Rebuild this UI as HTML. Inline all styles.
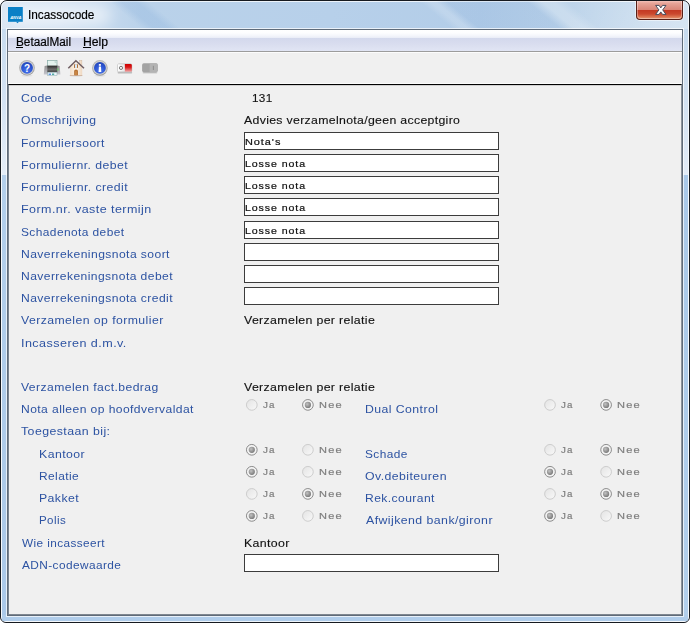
<!DOCTYPE html>
<html>
<head>
<meta charset="utf-8">
<title>Incassocode</title>
<style>
html,body{margin:0;padding:0;background:#fff;}
body{width:690px;height:623px;position:relative;overflow:hidden;font-family:"Liberation Sans",sans-serif;}
#win{position:absolute;left:0;top:0;width:688px;height:621px;border:1px solid #161a20;border-radius:7px 7px 6px 6px;
  background:
   linear-gradient(115deg, rgba(255,255,255,0) 0px, rgba(255,255,255,0) 520px, rgba(255,255,255,.22) 600px, rgba(255,255,255,.30) 690px) ,
   linear-gradient(90deg,#dbe7f4 0px,#d3e2f2 60px,#bad2ea 140px,#b7d0ea 330px,#b3cde8 480px,#bdd4ea 560px,#c9dcee 690px);
  overflow:hidden;}
#win:before{content:"";position:absolute;left:0;top:0;right:0;bottom:0;border:1px solid rgba(255,255,255,.75);border-radius:6px 6px 5px 5px;}
#sideL{position:absolute;left:1px;top:28px;width:6px;height:590px;background:linear-gradient(180deg,#c8dcf0 0px,#d3e2f3 70px,#e4edf7 146px,#b3cfeb 146px,#aac8e8 590px);}
#sideR{position:absolute;left:681px;top:28px;width:6px;height:590px;background:linear-gradient(180deg,#c6daee 0px,#d2e1f1 70px,#e2ebf6 146px,#a9c8e8 146px,#b2cfec 590px);}
#sideB{position:absolute;left:1px;top:614px;width:686px;height:6px;background:#b0cdeb;}
#edge{position:absolute;left:5px;top:27px;width:676px;height:587px;border:1px solid rgba(255,255,255,.7);}
#client{position:absolute;left:6px;top:28px;width:674px;height:585px;border:1px solid #5f6b79;background:#f0f0f0;}
#menu{position:absolute;left:0;top:0;width:674px;height:21px;background:linear-gradient(180deg,#ffffff 0px,#fdfdff 3px,#f3f5fb 6px,#e9ecf7 8px,#d3d8ec 8px,#d9ddef 14px,#e1e5f4 21px);}
#menuline{position:absolute;left:0;top:21px;width:674px;height:1px;background:#9c9c9c;}
#tool{position:absolute;left:0;top:22px;width:674px;height:31px;background:#f0f0f0;border-top:1px solid #fcfcfc;}
#tool:after{content:"";position:absolute;left:0;bottom:0;width:100%;height:1px;background:#fafafa;}
#panel{position:absolute;left:0;top:54px;width:672px;height:529px;background:#f0f0f0;border-top:1px solid #000;border-left:1px solid #7b8591;border-right:1px solid #8d949c;border-bottom:1px solid #7f8790;}
#panel:before{content:"";position:absolute;left:0;top:0;width:100%;height:1px;background:#d0d0d0;}
.t{position:absolute;white-space:pre;line-height:20px;height:20px;transform-origin:0 50%;}
svg{position:absolute;left:0;top:0;}
#close{position:absolute;left:635px;top:0px;width:45px;height:17.5px;border:1px solid #572018;border-top:none;border-radius:0 0 4px 4px;
 background:linear-gradient(180deg,#f3c3ba 0px,#e8a599 2px,#e0978a 5px,#da8576 9px,#c43a24 9.5px,#cb482e 13px,#db7652 16px,#e79c7a 18px);box-shadow:0 0 0 1px rgba(255,255,255,.5);}
#close:before{content:"";position:absolute;left:0;top:0;right:0;bottom:0;border:1px solid rgba(255,255,255,.35);border-top:none;border-radius:0 0 4px 4px;}
#tglass{position:absolute;left:0;top:0;width:688px;height:28px;background:linear-gradient(39.5deg,
  rgba(120,165,215,0) 19.6%, rgba(120,165,215,.22) 21.3%, rgba(120,165,215,.22) 23.3%, rgba(120,165,215,0) 25%,
  rgba(255,255,255,0) 62.6%, rgba(255,255,255,.16) 64%, rgba(255,255,255,.16) 64.8%, rgba(110,155,210,.12) 66.4%, rgba(110,155,210,.14) 77.5%, rgba(255,255,255,.2) 79.5%, rgba(255,255,255,.2) 81%, rgba(255,255,255,0) 83%);}
#glow{position:absolute;left:10px;top:4px;width:100px;height:20px;background:rgba(255,255,255,.55);filter:blur(7px);border-radius:10px;}
.ul{position:absolute;height:1px;background:#000;}
</style>
</head>
<body>
<div id="win">
  <div id="tglass"></div>
  <div id="glow"></div>
  <div id="sideL"></div><div id="sideR"></div><div id="sideB"></div>
  <div id="close"></div>
  <div id="edge"></div>
  <div id="client">
    <div id="menu"></div><div id="menuline"></div>
    <div id="tool"></div>
    <div id="panel"></div>
  </div>
</div>
<svg width="690" height="623" viewBox="0 0 690 623">
<defs>
<linearGradient id="rg" x1="0" y1="0" x2="1" y2="1"><stop offset="0" stop-color="#e3e3e3"/><stop offset="1" stop-color="#f9f9f9"/></linearGradient>
<radialGradient id="dot" cx=".38" cy=".38" r=".65"><stop offset="0" stop-color="#c2c2c2"/><stop offset=".55" stop-color="#9a9a9a"/><stop offset="1" stop-color="#7a7a7a"/></radialGradient>
</defs>
<defs>
<radialGradient id="blueball" cx=".5" cy=".75" r=".75"><stop offset="0" stop-color="#4a78ee"/><stop offset=".6" stop-color="#2c55d2"/><stop offset="1" stop-color="#2446b8"/></radialGradient>
<linearGradient id="ring" x1="0" y1="0" x2="0" y2="1"><stop offset="0" stop-color="#b8b8b8"/><stop offset="1" stop-color="#9a9a9a"/></linearGradient>
<linearGradient id="prbody" x1="0" y1="0" x2="0" y2="1"><stop offset="0" stop-color="#2a2a2a"/><stop offset=".55" stop-color="#6e6e6e"/><stop offset="1" stop-color="#3c3c3c"/></linearGradient>
<linearGradient id="prwing" x1="0" y1="0" x2="0" y2="1"><stop offset="0" stop-color="#8f8f8f"/><stop offset="1" stop-color="#c4c4cc"/></linearGradient>
<linearGradient id="redsw" x1="0" y1="0" x2="0" y2="1"><stop offset="0" stop-color="#d00000"/><stop offset=".4" stop-color="#d81818"/><stop offset="1" stop-color="#f2a8a8"/></linearGradient>
<linearGradient id="whsw" x1="0" y1="0" x2="1" y2="0"><stop offset="0" stop-color="#ffffff"/><stop offset="1" stop-color="#e6e6e6"/></linearGradient>
<linearGradient id="wall" x1="0" y1="0" x2="1" y2="0"><stop offset="0" stop-color="#f3dfca"/><stop offset=".5" stop-color="#fdf3e6"/><stop offset="1" stop-color="#efd9c2"/></linearGradient>
</defs>
<!-- app icon -->
<rect x="8" y="7" width="14.8" height="14.8" fill="#0a80c6"/>
<path d="M16 21.7 L17.5 23.2 L19 21.7z" fill="#0a80c6"/>
<text x="10.2" y="18.7" font-family="Liberation Sans, sans-serif" font-size="3.3" font-weight="bold" font-style="italic" fill="#fff" textLength="11.2" lengthAdjust="spacingAndGlyphs">ANVA</text>
<!-- close X -->
<polygon points="655.6,5.4 659.1,5.4 660.8,7.9 662.5,5.4 666,5.4 662.7,9.9 666,14.4 662.5,14.4 660.8,11.9 659.1,14.4 655.6,14.4 658.9,9.9" fill="#fff" stroke="#464c5c" stroke-width="1" stroke-linejoin="round"/>
<!-- help -->
<ellipse cx="27" cy="75.7" rx="5.5" ry=".8" fill="rgba(0,0,0,.08)"/>
<circle cx="27" cy="67.8" r="7.8" fill="url(#ring)"/>
<circle cx="27" cy="67.8" r="6.9" fill="#d2d2d2"/>
<circle cx="27" cy="67.8" r="5.9" fill="url(#blueball)"/>
<text x="27.1" y="71.7" text-anchor="middle" font-family="Liberation Sans, sans-serif" font-size="10" font-weight="bold" fill="#fff">?</text>
<!-- info -->
<ellipse cx="100" cy="75.7" rx="5.5" ry=".8" fill="rgba(0,0,0,.08)"/>
<circle cx="99.9" cy="67.9" r="7.8" fill="url(#ring)"/>
<circle cx="99.9" cy="67.9" r="6.9" fill="#d2d2d2"/>
<circle cx="99.9" cy="67.9" r="5.9" fill="url(#blueball)"/>
<rect x="98.8" y="63.9" width="2.2" height="1.9" rx=".6" fill="#fff"/>
<path d="M98.9 66.6 H101 L101.3 72 H98.6z" fill="#fff"/>
<!-- printer -->
<path d="M44.6 66 L47.2 65.6 H57.2 L59.6 66 L60.4 74.4 H43.8z" fill="url(#prwing)"/>
<rect x="47.4" y="60.4" width="9.6" height="6" fill="#e4f3ef" stroke="#86aaa6" stroke-width=".7"/>
<path d="M54.6 60.4 L57 62.8 H54.6z" fill="#b9d2ce"/>
<rect x="47.3" y="65.6" width="10" height="6.8" fill="url(#prbody)"/>
<rect x="47.6" y="72.2" width="9.4" height="3.4" fill="#eef4fb" stroke="#8aa" stroke-width=".5"/>
<rect x="48.6" y="73.6" width="2.4" height="1.2" fill="#3a7ad8"/>
<rect x="52" y="73.6" width="2.2" height="1.2" fill="#2c9a8c"/>
<rect x="57.4" y="68.4" width="1" height="2.2" fill="#5fd45f"/>
<!-- house -->
<ellipse cx="76" cy="75.8" rx="7" ry=".8" fill="rgba(0,0,0,.10)"/>
<rect x="79.7" y="60.4" width="2.2" height="5" fill="#f1dcc6" stroke="#c9ad95" stroke-width=".4"/>
<path d="M70 67.2 L75.9 61.6 L82.2 67.2 V75.6 H70z" fill="url(#wall)"/>
<path d="M68.3 68.3 L75.9 60.8 L84 68.3" fill="none" stroke="#705f63" stroke-width="1.55" stroke-linejoin="miter"/>
<rect x="74.1" y="64.3" width="3.8" height="3.6" fill="#a8642a"/>
<rect x="75" y="64.3" width="2" height="3.6" fill="#d6e9fb"/>
<path d="M74.2 75.6 V71 Q74.2 69.5 76 69.5 Q77.9 69.5 77.9 71 V75.6z" fill="#b06a2c"/>
<path d="M75 75.6 V71.4 Q75 70.6 76 70.6 Q77.1 70.6 77.1 71.4 V75.6z" fill="#c98542"/>
<rect x="70" y="75" width="12.2" height=".7" fill="#c9a68e"/>
<!-- red switch -->
<rect x="117.6" y="72" width="14.6" height="1.4" rx=".7" fill="rgba(0,0,0,.22)"/>
<rect x="117.3" y="63.5" width="14.9" height="8.8" rx="1.6" fill="#bdbdbd"/>
<path d="M118 64.2 H124.9 V71.6 H118 Q117.9 71.6 117.9 71.2 V64.6 Q117.9 64.2 118 64.2z" fill="url(#whsw)"/>
<path d="M124.9 64.1 H130.4 Q131.8 64.1 131.8 65.5 V71 Q131.8 71.8 131 71.8 H124.9z" fill="url(#redsw)"/>
<circle cx="121" cy="67.9" r="1.6" fill="none" stroke="#5a5a5a" stroke-width=".8"/>
<!-- grey switch -->
<rect x="142.6" y="72" width="14.8" height="1.4" rx=".7" fill="rgba(0,0,0,.15)"/>
<rect x="142.1" y="63.2" width="15.7" height="9.2" rx="1.8" fill="#a3a3a3"/>
<path d="M149.6 63.6 H156.2 Q157.4 63.6 157.4 64.8 V70.8 Q157.4 72 156.2 72 H149.6z" fill="#b3b3b3"/>
<rect x="152.9" y="65.8" width=".9" height="4.2" fill="#8a8a8a"/>

<rect x="244.5" y="132.5" width="254" height="17" fill="#fff" stroke="#3c3c3c" stroke-width="1"/><rect x="244.5" y="154.5" width="254" height="17" fill="#fff" stroke="#3c3c3c" stroke-width="1"/><rect x="244.5" y="176.5" width="254" height="17" fill="#fff" stroke="#3c3c3c" stroke-width="1"/><rect x="244.5" y="198.5" width="254" height="17" fill="#fff" stroke="#3c3c3c" stroke-width="1"/><rect x="244.5" y="221.5" width="254" height="17" fill="#fff" stroke="#3c3c3c" stroke-width="1"/><rect x="244.5" y="243.5" width="254" height="17" fill="#fff" stroke="#3c3c3c" stroke-width="1"/><rect x="244.5" y="265.5" width="254" height="17" fill="#fff" stroke="#3c3c3c" stroke-width="1"/><rect x="244.5" y="287.5" width="254" height="17" fill="#fff" stroke="#3c3c3c" stroke-width="1"/><rect x="244.5" y="554.5" width="254" height="17" fill="#fff" stroke="#3c3c3c" stroke-width="1"/>
<circle cx="251.8" cy="404.9" r="5.35" fill="url(#rg)" stroke="#cdcdcd" stroke-width="1"/><circle cx="307.9" cy="404.9" r="5.35" fill="#f3f3f3" stroke="#8c8c8c" stroke-width="1"/><circle cx="307.9" cy="404.9" r="3.1" fill="url(#dot)"/><circle cx="251.8" cy="449.79999999999995" r="5.35" fill="#f3f3f3" stroke="#8c8c8c" stroke-width="1"/><circle cx="251.8" cy="449.79999999999995" r="3.1" fill="url(#dot)"/><circle cx="307.9" cy="449.79999999999995" r="5.35" fill="url(#rg)" stroke="#cdcdcd" stroke-width="1"/><circle cx="251.8" cy="471.79999999999995" r="5.35" fill="#f3f3f3" stroke="#8c8c8c" stroke-width="1"/><circle cx="251.8" cy="471.79999999999995" r="3.1" fill="url(#dot)"/><circle cx="307.9" cy="471.79999999999995" r="5.35" fill="url(#rg)" stroke="#cdcdcd" stroke-width="1"/><circle cx="251.8" cy="493.9" r="5.35" fill="url(#rg)" stroke="#cdcdcd" stroke-width="1"/><circle cx="307.9" cy="493.9" r="5.35" fill="#f3f3f3" stroke="#8c8c8c" stroke-width="1"/><circle cx="307.9" cy="493.9" r="3.1" fill="url(#dot)"/><circle cx="251.8" cy="515.9" r="5.35" fill="#f3f3f3" stroke="#8c8c8c" stroke-width="1"/><circle cx="251.8" cy="515.9" r="3.1" fill="url(#dot)"/><circle cx="307.9" cy="515.9" r="5.35" fill="url(#rg)" stroke="#cdcdcd" stroke-width="1"/><circle cx="550.0" cy="404.9" r="5.35" fill="url(#rg)" stroke="#cdcdcd" stroke-width="1"/><circle cx="606.1" cy="404.9" r="5.35" fill="#f3f3f3" stroke="#8c8c8c" stroke-width="1"/><circle cx="606.1" cy="404.9" r="3.1" fill="url(#dot)"/><circle cx="550.0" cy="449.79999999999995" r="5.35" fill="url(#rg)" stroke="#cdcdcd" stroke-width="1"/><circle cx="606.1" cy="449.79999999999995" r="5.35" fill="#f3f3f3" stroke="#8c8c8c" stroke-width="1"/><circle cx="606.1" cy="449.79999999999995" r="3.1" fill="url(#dot)"/><circle cx="550.0" cy="471.79999999999995" r="5.35" fill="#f3f3f3" stroke="#8c8c8c" stroke-width="1"/><circle cx="550.0" cy="471.79999999999995" r="3.1" fill="url(#dot)"/><circle cx="606.1" cy="471.79999999999995" r="5.35" fill="url(#rg)" stroke="#cdcdcd" stroke-width="1"/><circle cx="550.0" cy="493.9" r="5.35" fill="url(#rg)" stroke="#cdcdcd" stroke-width="1"/><circle cx="606.1" cy="493.9" r="5.35" fill="#f3f3f3" stroke="#8c8c8c" stroke-width="1"/><circle cx="606.1" cy="493.9" r="3.1" fill="url(#dot)"/><circle cx="550.0" cy="515.9" r="5.35" fill="#f3f3f3" stroke="#8c8c8c" stroke-width="1"/><circle cx="550.0" cy="515.9" r="3.1" fill="url(#dot)"/><circle cx="606.1" cy="515.9" r="5.35" fill="url(#rg)" stroke="#cdcdcd" stroke-width="1"/>
</svg>
<span class="t" style="-webkit-text-stroke:.18px;left:28.21px;top:5.00px;font-size:12px;letter-spacing:0.0px;color:#000;transform:scaleX(0.9856)">Incassocode</span>
<span class="t" style="-webkit-text-stroke:.18px;left:15.62px;top:32.00px;font-size:12px;letter-spacing:0.0px;color:#000;transform:scaleX(0.9825)">BetaalMail</span>
<span class="t" style="-webkit-text-stroke:.18px;left:82.58px;top:32.00px;font-size:12px;letter-spacing:0.0px;color:#000;transform:scaleX(1.0151)">Help</span>
<div class="ul" style="left:16px;top:47px;width:7px"></div>
<div class="ul" style="left:83px;top:47px;width:8px"></div>
<span class="t" style="left:21.07px;top:88.00px;font-size:11.5px;letter-spacing:0.4px;color:#2d53a2;transform:scaleX(1.0667)">Code</span>
<span class="t" style="left:21.07px;top:110.00px;font-size:11.5px;letter-spacing:0.4px;color:#2d53a2;transform:scaleX(1.0595)">Omschrijving</span>
<span class="t" style="left:20.55px;top:133.00px;font-size:11.5px;letter-spacing:0.4px;color:#2d53a2;transform:scaleX(1.0505)">Formuliersoort</span>
<span class="t" style="left:20.54px;top:155.00px;font-size:11.5px;letter-spacing:0.4px;color:#2d53a2;transform:scaleX(1.0646)">Formuliernr. debet</span>
<span class="t" style="left:20.53px;top:177.00px;font-size:11.5px;letter-spacing:0.4px;color:#2d53a2;transform:scaleX(1.0673)">Formuliernr. credit</span>
<span class="t" style="left:20.51px;top:199.00px;font-size:11.5px;letter-spacing:0.4px;color:#2d53a2;transform:scaleX(1.0881)">Form.nr. vaste termijn</span>
<span class="t" style="left:21.08px;top:222.00px;font-size:11.5px;letter-spacing:0.4px;color:#2d53a2;transform:scaleX(1.0370)">Schadenota debet</span>
<span class="t" style="left:20.55px;top:244.00px;font-size:11.5px;letter-spacing:0.4px;color:#2d53a2;transform:scaleX(1.0540)">Naverrekeningsnota soort</span>
<span class="t" style="left:20.55px;top:266.00px;font-size:11.5px;letter-spacing:0.4px;color:#2d53a2;transform:scaleX(1.0517)">Naverrekeningsnota debet</span>
<span class="t" style="left:20.55px;top:288.00px;font-size:11.5px;letter-spacing:0.4px;color:#2d53a2;transform:scaleX(1.0536)">Naverrekeningsnota credit</span>
<span class="t" style="left:21.00px;top:310.00px;font-size:11.5px;letter-spacing:0.4px;color:#2d53a2;transform:scaleX(1.0657)">Verzamelen op formulier</span>
<span class="t" style="left:20.51px;top:333.00px;font-size:11.5px;letter-spacing:0.4px;color:#2d53a2;transform:scaleX(1.0939)">Incasseren d.m.v.</span>
<span class="t" style="left:21.00px;top:377.00px;font-size:11.5px;letter-spacing:0.4px;color:#2d53a2;transform:scaleX(1.0569)">Verzamelen fact.bedrag</span>
<span class="t" style="left:20.55px;top:399.00px;font-size:11.5px;letter-spacing:0.4px;color:#2d53a2;transform:scaleX(1.0515)">Nota alleen op hoofdvervaldat</span>
<span class="t" style="left:21.33px;top:421.00px;font-size:11.5px;letter-spacing:0.4px;color:#2d53a2;transform:scaleX(1.0728)">Toegestaan bij:</span>
<span class="t" style="left:38.53px;top:444.00px;font-size:11.5px;letter-spacing:0.4px;color:#2d53a2;transform:scaleX(1.0699)">Kantoor</span>
<span class="t" style="left:38.56px;top:466.00px;font-size:11.5px;letter-spacing:0.4px;color:#2d53a2;transform:scaleX(1.0395)">Relatie</span>
<span class="t" style="left:38.53px;top:488.00px;font-size:11.5px;letter-spacing:0.4px;color:#2d53a2;transform:scaleX(1.0667)">Pakket</span>
<span class="t" style="left:38.59px;top:510.00px;font-size:11.5px;letter-spacing:0.4px;color:#2d53a2;transform:scaleX(1.0059)">Polis</span>
<span class="t" style="left:21.60px;top:533.00px;font-size:11.5px;letter-spacing:0.4px;color:#2d53a2;transform:scaleX(1.0236)">Wie incasseert</span>
<span class="t" style="left:21.60px;top:555.00px;font-size:11.5px;letter-spacing:0.4px;color:#2d53a2;transform:scaleX(1.0304)">ADN-codewaarde</span>
<span class="t" style="left:364.53px;top:399.00px;font-size:11.5px;letter-spacing:0.4px;color:#2d53a2;transform:scaleX(1.0677)">Dual Control</span>
<span class="t" style="left:365.08px;top:444.00px;font-size:11.5px;letter-spacing:0.4px;color:#2d53a2;transform:scaleX(1.0325)">Schade</span>
<span class="t" style="left:365.07px;top:466.00px;font-size:11.5px;letter-spacing:0.4px;color:#2d53a2;transform:scaleX(1.0693)">Ov.debiteuren</span>
<span class="t" style="left:364.55px;top:488.00px;font-size:11.5px;letter-spacing:0.4px;color:#2d53a2;transform:scaleX(1.0523)">Rek.courant</span>
<span class="t" style="left:365.60px;top:510.00px;font-size:11.5px;letter-spacing:0.4px;color:#2d53a2;transform:scaleX(1.0726)">Afwijkend bank/gironr</span>
<span class="t" style="-webkit-text-stroke:.12px;left:252.36px;top:88.00px;font-size:10.5px;letter-spacing:0.3px;color:#111;transform:scaleX(1.1176)">131</span>
<span class="t" style="-webkit-text-stroke:.12px;left:244.40px;top:110.00px;font-size:11.5px;letter-spacing:0.3px;color:#111;transform:scaleX(1.0690)">Advies verzamelnota/geen acceptgiro</span>
<span class="t" style="-webkit-text-stroke:.12px;left:244.30px;top:310.00px;font-size:11px;letter-spacing:0.3px;color:#111;transform:scaleX(1.1241)">Verzamelen per relatie</span>
<span class="t" style="-webkit-text-stroke:.12px;left:244.30px;top:377.00px;font-size:11px;letter-spacing:0.3px;color:#111;transform:scaleX(1.1241)">Verzamelen per relatie</span>
<span class="t" style="-webkit-text-stroke:.12px;left:243.68px;top:533.00px;font-size:11px;letter-spacing:0.3px;color:#111;transform:scaleX(1.1236)">Kantoor</span>
<span class="t" style="-webkit-text-stroke:.2px;left:244.92px;top:132.00px;font-size:9.3px;letter-spacing:0.8px;color:#111;transform:scaleX(1.1759)">Nota's</span>
<span class="t" style="-webkit-text-stroke:.2px;left:244.94px;top:154.00px;font-size:9.3px;letter-spacing:0.8px;color:#111;transform:scaleX(1.1404)">Losse nota</span>
<span class="t" style="-webkit-text-stroke:.2px;left:244.94px;top:176.00px;font-size:9.3px;letter-spacing:0.8px;color:#111;transform:scaleX(1.1404)">Losse nota</span>
<span class="t" style="-webkit-text-stroke:.2px;left:244.94px;top:198.00px;font-size:9.3px;letter-spacing:0.8px;color:#111;transform:scaleX(1.1404)">Losse nota</span>
<span class="t" style="-webkit-text-stroke:.2px;left:244.94px;top:221.00px;font-size:9.3px;letter-spacing:0.8px;color:#111;transform:scaleX(1.1404)">Losse nota</span>
<span class="t" style="-webkit-text-stroke:.2px;left:262.94px;top:395.00px;font-size:9.3px;letter-spacing:1.0px;color:#7e7e7e;transform:scaleX(1.0571)">Ja</span>
<span class="t" style="-webkit-text-stroke:.2px;left:318.61px;top:395.00px;font-size:9.3px;letter-spacing:1.0px;color:#7e7e7e;transform:scaleX(1.1833)">Nee</span>
<span class="t" style="-webkit-text-stroke:.2px;left:262.94px;top:440.00px;font-size:9.3px;letter-spacing:1.0px;color:#7e7e7e;transform:scaleX(1.0571)">Ja</span>
<span class="t" style="-webkit-text-stroke:.2px;left:318.61px;top:440.00px;font-size:9.3px;letter-spacing:1.0px;color:#7e7e7e;transform:scaleX(1.1833)">Nee</span>
<span class="t" style="-webkit-text-stroke:.2px;left:262.94px;top:462.00px;font-size:9.3px;letter-spacing:1.0px;color:#7e7e7e;transform:scaleX(1.0571)">Ja</span>
<span class="t" style="-webkit-text-stroke:.2px;left:318.61px;top:462.00px;font-size:9.3px;letter-spacing:1.0px;color:#7e7e7e;transform:scaleX(1.1833)">Nee</span>
<span class="t" style="-webkit-text-stroke:.2px;left:262.94px;top:484.00px;font-size:9.3px;letter-spacing:1.0px;color:#7e7e7e;transform:scaleX(1.0571)">Ja</span>
<span class="t" style="-webkit-text-stroke:.2px;left:318.61px;top:484.00px;font-size:9.3px;letter-spacing:1.0px;color:#7e7e7e;transform:scaleX(1.1833)">Nee</span>
<span class="t" style="-webkit-text-stroke:.2px;left:262.94px;top:506.00px;font-size:9.3px;letter-spacing:1.0px;color:#7e7e7e;transform:scaleX(1.0571)">Ja</span>
<span class="t" style="-webkit-text-stroke:.2px;left:318.61px;top:506.00px;font-size:9.3px;letter-spacing:1.0px;color:#7e7e7e;transform:scaleX(1.1833)">Nee</span>
<span class="t" style="-webkit-text-stroke:.2px;left:560.94px;top:395.00px;font-size:9.3px;letter-spacing:1.0px;color:#7e7e7e;transform:scaleX(1.0476)">Ja</span>
<span class="t" style="-webkit-text-stroke:.2px;left:616.71px;top:395.00px;font-size:9.3px;letter-spacing:1.0px;color:#7e7e7e;transform:scaleX(1.1889)">Nee</span>
<span class="t" style="-webkit-text-stroke:.2px;left:560.94px;top:440.00px;font-size:9.3px;letter-spacing:1.0px;color:#7e7e7e;transform:scaleX(1.0476)">Ja</span>
<span class="t" style="-webkit-text-stroke:.2px;left:616.71px;top:440.00px;font-size:9.3px;letter-spacing:1.0px;color:#7e7e7e;transform:scaleX(1.1889)">Nee</span>
<span class="t" style="-webkit-text-stroke:.2px;left:560.94px;top:462.00px;font-size:9.3px;letter-spacing:1.0px;color:#7e7e7e;transform:scaleX(1.0476)">Ja</span>
<span class="t" style="-webkit-text-stroke:.2px;left:616.71px;top:462.00px;font-size:9.3px;letter-spacing:1.0px;color:#7e7e7e;transform:scaleX(1.1889)">Nee</span>
<span class="t" style="-webkit-text-stroke:.2px;left:560.94px;top:484.00px;font-size:9.3px;letter-spacing:1.0px;color:#7e7e7e;transform:scaleX(1.0476)">Ja</span>
<span class="t" style="-webkit-text-stroke:.2px;left:616.71px;top:484.00px;font-size:9.3px;letter-spacing:1.0px;color:#7e7e7e;transform:scaleX(1.1889)">Nee</span>
<span class="t" style="-webkit-text-stroke:.2px;left:560.94px;top:506.00px;font-size:9.3px;letter-spacing:1.0px;color:#7e7e7e;transform:scaleX(1.0476)">Ja</span>
<span class="t" style="-webkit-text-stroke:.2px;left:616.71px;top:506.00px;font-size:9.3px;letter-spacing:1.0px;color:#7e7e7e;transform:scaleX(1.1889)">Nee</span>
</body>
</html>
